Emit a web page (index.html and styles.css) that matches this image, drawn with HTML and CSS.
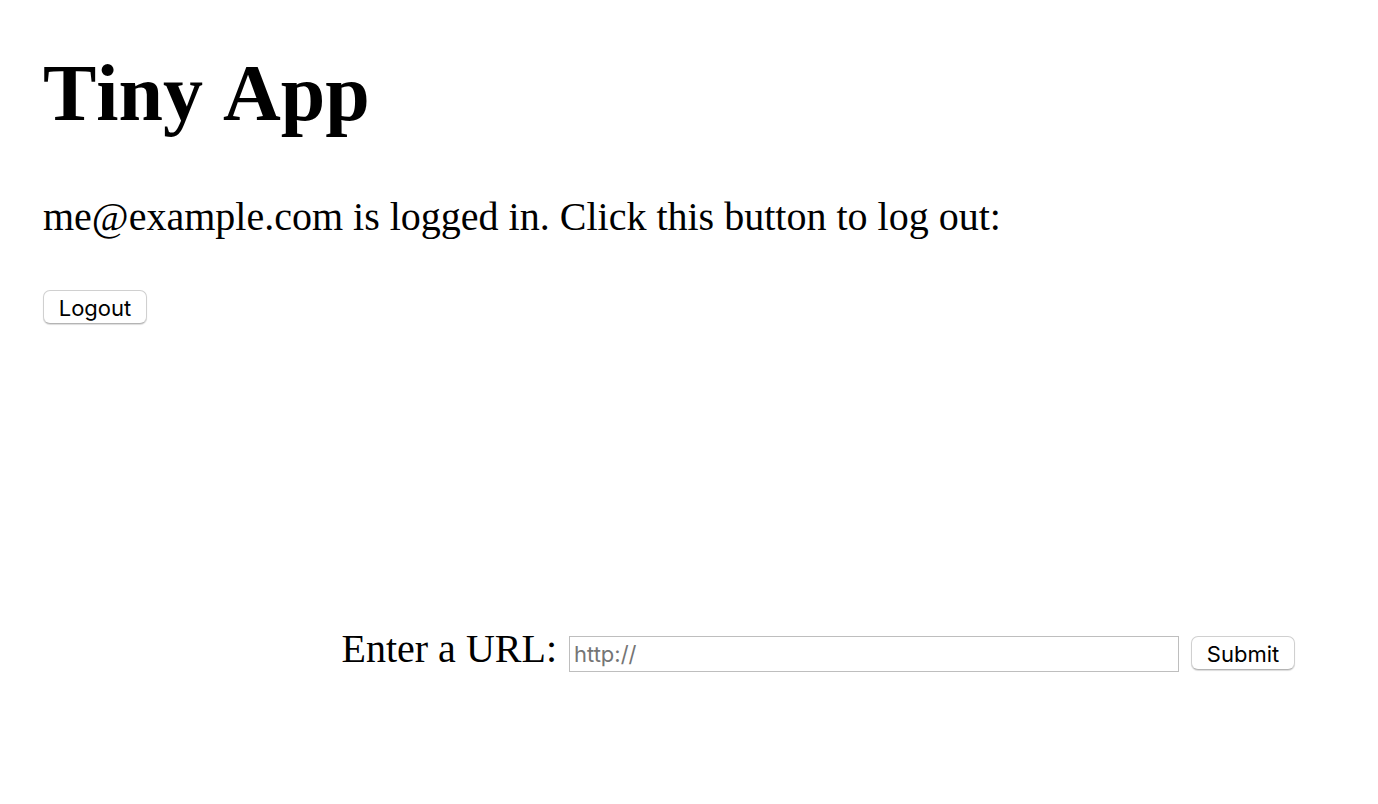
FILE: index.html
```html
<!DOCTYPE html>
<html lang="en">
<head>
<meta charset="utf-8">
<title>Tiny App</title>
<link rel="stylesheet" href="styles.css">
</head>
<body>
<header class="header">
<h1 class="title">Tiny App</h1>
<form class="logout">
<p class="status">me@example.com is logged in. Click this button to log out:</p>
<button class="button" type="submit">Logout</button>
</form>
</header>
<main class="main">
<form class="url-form">
<label class="label" for="url">Enter a URL:</label>
<input class="field" id="url" name="url" type="text" placeholder="http://">
<button class="button" type="submit">Submit</button>
</form>
</main>
</body>
</html>
```

FILE: styles.css
```css
* {
  box-sizing: border-box;
}

body {
  margin: 0;
  padding: 47px 83px 0 43px;
  background: #fff;
  color: #000;
  font: 40px/46px "Liberation Serif", "Times New Roman", serif;
}

.title {
  margin: 0;
  font-size: 80px;
  line-height: 92px;
  font-weight: bold;
  font-kerning: none;
}

.status {
  margin: 55px 0 50px;
}

.button {
  display: block;
  flex: none;
  width: 104px;
  height: 34px;
  padding: 0;
  border: 1px solid #d0d0d0;
  border-bottom-color: #b4b4b4;
  border-radius: 7px;
  background: #fff;
  box-shadow: 0 1px 1px #dcdcdc;
  color: #000;
  font: 22px/34px Inter, sans-serif;
}

.main {
  margin-top: 302px;
}

.url-form {
  display: flex;
  justify-content: flex-end;
  align-items: baseline;
}

.label {
  margin-right: 12px;
}

.field {
  flex: 0 1 610px;
  min-width: 0;
  height: 36px;
  margin-right: 12px;
  padding: 0 4px;
  border: 1px solid #bebebe;
  border-radius: 0;
  background: #fff;
  font: 22px/34px Inter, sans-serif;
}

.field::placeholder {
  color: #757575;
  opacity: 1;
}
```
